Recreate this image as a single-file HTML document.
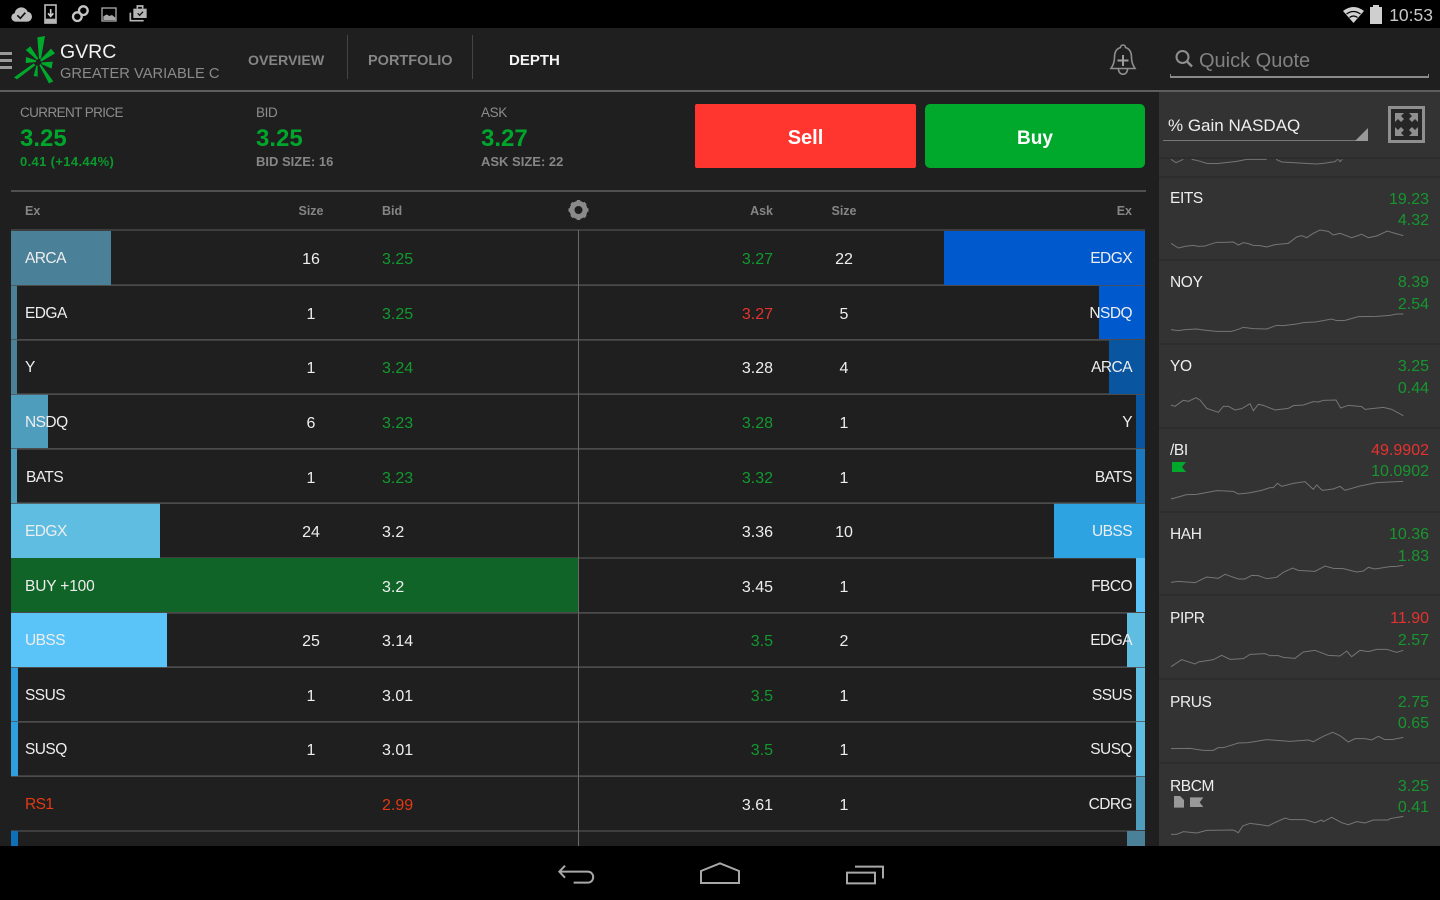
<!DOCTYPE html>
<html><head><meta charset="utf-8"><style>
html,body{margin:0;padding:0;background:#1f1f1f}
#p{position:relative;width:1440px;height:900px;overflow:hidden;background:#1f1f1f;font-family:"Liberation Sans",sans-serif;color:#eee}
#p div{position:absolute}
.t{position:absolute;line-height:20px;white-space:nowrap;font-size:15.5px;letter-spacing:-.55px;color:#eee}
.r{text-align:right}
.c{text-align:center}
.g{color:#12992f}
.rd{color:#e5322f}
.n{font-size:16px;letter-spacing:0}
.line{left:11px;width:1134px;height:2px;background:#3e3e3e}
.ov{left:11px;width:1134px;height:1px;background:rgba(80,80,80,.8)}
.h{font-size:12.5px;font-weight:bold;color:#858585;letter-spacing:0}
.sep{left:1159px;width:281px;height:2px;background:#2d2d2d}
.tick{left:1170px;font-size:15.5px;letter-spacing:-.4px;color:#eee}
.val{left:1329px;width:100px;text-align:right;font-size:16px;letter-spacing:0;color:#17962f}
svg{position:absolute;overflow:visible}
</style></head><body><div id="p">

<!-- status bar -->
<div style="left:0;top:0;width:1440px;height:28px;background:#000"></div>
<svg style="left:0;top:0" width="240" height="28" viewBox="0 0 720 84">
<g fill="#bdbdbd"><circle cx="64" cy="42" r="20"/><circle cx="47" cy="52" r="13"/><circle cx="81" cy="50" r="15"/><rect x="47" y="50" width="34" height="15"/></g><path d="M52 46l9 9 15-17" fill="none" stroke="#111" stroke-width="5"/>
<rect x="135" y="15" width="33" height="54" fill="none" stroke="#b5b5b5" stroke-width="5"/><path d="M152 27v22M144 40l8 9 8-9" fill="none" stroke="#ccc" stroke-width="5"/><rect x="135" y="56" width="33" height="13" fill="#b5b5b5"/>
<circle cx="232" cy="50" r="13" fill="none" stroke="#c5c5c5" stroke-width="7"/><circle cx="250" cy="32" r="13" fill="none" stroke="#c5c5c5" stroke-width="7"/>
<rect x="306" y="24" width="42" height="39" fill="none" stroke="#a8a8a8" stroke-width="4"/><path d="M310 60v-11l10-6 8 5 8-3 10 8v7z" fill="#a8a8a8"/>
<path d="M391 38v24h40" fill="none" stroke="#b5b5b5" stroke-width="5"/><rect x="400" y="26" width="40" height="28" fill="#b5b5b5"/><path d="M412 26v-8h16v8" fill="none" stroke="#b5b5b5" stroke-width="5"/><path d="M413 40l6 6 10-11" fill="none" stroke="#111" stroke-width="4"/>
</svg>
<svg style="left:1340px;top:4px" width="40" height="20" viewBox="0 0 40 20">
<path d="M3 7q10.500-8 21 0L13.500 19z" fill="#d0d0d0"/><path d="M6.500 10q7-5 14 0" fill="none" stroke="#000" stroke-width="1.200"/><path d="M9.500 13.500q4-3 8 0" fill="none" stroke="#000" stroke-width="1.200"/>
<rect x="30" y="3" width="12" height="17" fill="#cfcfcf"/><rect x="33" y="1" width="6" height="2" fill="#cfcfcf"/>
</svg>
<span class="t r" style="left:1370px;width:63px;top:5px;font-size:17.500px;letter-spacing:0;color:#c8c8c8">10:53</span>

<!-- app bar -->
<div style="left:0;top:90px;width:1440px;height:2px;background:#5e5e5e"></div>
<div style="left:0;top:52px;width:12px;height:3px;background:#9a9a9a"></div>
<div style="left:0;top:59px;width:12px;height:3px;background:#9a9a9a"></div>
<div style="left:0;top:66px;width:12px;height:3px;background:#9a9a9a"></div>
<svg style="left:0;top:0" width="240" height="95" viewBox="0 0 720 285"><g fill="#00a92c">
<polygon points="112,112 135,108 123,176 117,176"/><polygon points="153,146 165,160 124,185 120,180"/><polygon points="158,185 155,206 124,192 125,187"/><polygon points="147,250 160,244 122,192 118,196"/><polygon points="101,228 113,230 113,197 109,196"/><polygon points="42,232 51,238 106,196 101,190"/><polygon points="78,171 77,189 108,186 108,181"/><polygon points="77,150 91,139 115,176 111,180"/></g></svg>
<span class="t" style="left:60px;top:42px;font-size:19.500px;letter-spacing:0;color:#f2f2f2">GVRC</span>
<span class="t" style="left:60px;top:64px;font-size:14.700px;letter-spacing:0;color:#8a8a8a">GREATER VARIABLE C</span>
<span class="t" style="left:248px;top:51px;font-size:14.200px;letter-spacing:0;font-weight:bold;color:#858585">OVERVIEW</span>
<div style="left:347px;top:35px;width:1px;height:44px;background:#454545"></div>
<span class="t" style="left:368px;top:51px;font-size:14.500px;letter-spacing:0;font-weight:bold;color:#858585">PORTFOLIO</span>
<div style="left:472px;top:35px;width:1px;height:44px;background:#454545"></div>
<span class="t" style="left:509px;top:51px;font-size:15px;letter-spacing:0;font-weight:bold;color:#f4f4f4">DEPTH</span>
<svg style="left:1108px;top:42px" width="30" height="34" viewBox="0 0 30 34">
<path d="M15 3a2.500 2.500 0 0 1 2.500 2.500c5 1.500 6 6 6 10 0 4 1.500 8 3.500 11H3c2-3 3.500-7 3.500-11 0-4 1-8.500 6-10A2.500 2.500 0 0 1 15 3z" fill="none" stroke="#8e8e8e" stroke-width="1.600"/>
<path d="M10.500 27c0 7 9 7 9 0" fill="none" stroke="#8e8e8e" stroke-width="1.600"/><path d="M15 13v11M9.500 18.500h11" stroke="#9c9c9c" stroke-width="2" fill="none"/></svg>
<svg style="left:1174px;top:49px" width="22" height="22" viewBox="0 0 22 22"><circle cx="8.500" cy="8" r="6" fill="none" stroke="#8f8f8f" stroke-width="2"/><path d="M13 12.500l5 5" stroke="#8f8f8f" stroke-width="2.500"/></svg>
<span class="t" style="left:1199px;top:51px;font-size:20px;letter-spacing:0;color:#808080">Quick Quote</span>
<div style="left:1170px;top:76px;width:259px;height:2px;background:#8a8a8a"></div>
<div style="left:1170px;top:74px;width:1px;height:3px;background:#8a8a8a"></div>
<div style="left:1428px;top:74px;width:1px;height:3px;background:#8a8a8a"></div>

<!-- quote -->
<span class="t" style="left:20px;top:103px;font-size:13.500px;letter-spacing:-.6px;color:#8c8c8c">CURRENT PRICE</span>
<span class="t" style="left:20px;top:129px;font-size:24px;letter-spacing:0;font-weight:bold;color:#00a62c">3.25</span>
<span class="t" style="left:20px;top:152px;font-size:13px;letter-spacing:.35px;font-weight:bold;color:#0a9a2c">0.41 (+14.44%)</span>
<span class="t" style="left:256px;top:103px;font-size:13.500px;letter-spacing:-.4px;color:#8c8c8c">BID</span>
<span class="t" style="left:256px;top:129px;font-size:24px;letter-spacing:0;font-weight:bold;color:#00a62c">3.25</span>
<span class="t" style="left:256px;top:152px;font-size:13px;letter-spacing:0;font-weight:bold;color:#868686">BID SIZE: 16</span>
<span class="t" style="left:481px;top:103px;font-size:13.500px;letter-spacing:-.4px;color:#8c8c8c">ASK</span>
<span class="t" style="left:481px;top:129px;font-size:24px;letter-spacing:0;font-weight:bold;color:#00a62c">3.27</span>
<span class="t" style="left:481px;top:152px;font-size:13px;letter-spacing:0;font-weight:bold;color:#868686">ASK SIZE: 22</span>
<div style="left:695px;top:104px;width:221px;height:64px;background:#ff352f;border-radius:2px"></div>
<span class="t c" style="left:695px;width:221px;top:128px;font-size:20px;letter-spacing:0;font-weight:bold;color:#fff">Sell</span>
<div style="left:925px;top:104px;width:220px;height:64px;background:#00a92c;border-radius:5px"></div>
<span class="t c" style="left:925px;width:220px;top:129px;font-size:19px;letter-spacing:0;font-weight:bold;color:#fff">Buy</span>

<!-- table header -->
<div style="left:11px;top:190px;width:1135px;height:2px;background:#505050"></div>
<span class="t h" style="left:25px;top:201px">Ex</span>
<span class="t h c" style="left:281px;width:60px;top:201px">Size</span>
<span class="t h" style="left:382px;top:201px">Bid</span>
<svg style="left:567px;top:199px" width="23" height="23" viewBox="0 0 23 23"><circle cx="11.500" cy="11" r="6.500" fill="none" stroke="#8a8a8a" stroke-width="5"/><g stroke="#8a8a8a" stroke-width="3.500"><path d="M11.500 1v3M11.500 18v3M1.500 11h3M18.500 11h3M4.500 4l2 2M16.500 16l2 2M18.500 4l-2 2M6.500 16l-2 2"/></g></svg>
<span class="t h r" style="left:713px;width:60px;top:201px">Ask</span>
<span class="t h c" style="left:814px;width:60px;top:201px">Size</span>
<span class="t h r" style="left:1072px;width:60px;top:201px">Ex</span>

<!-- row lines -->
<div class="line" style="top:229px"></div>
<div class="line" style="top:284px"></div>
<div class="line" style="top:339px"></div>
<div class="line" style="top:393px"></div>
<div class="line" style="top:448px"></div>
<div class="line" style="top:502px"></div>
<div class="line" style="top:557px"></div>
<div class="line" style="top:612px"></div>
<div class="line" style="top:666px"></div>
<div class="line" style="top:721px"></div>
<div class="line" style="top:775px"></div>
<div class="line" style="top:830px"></div>

<!-- bars -->
<div style="left:11px;top:231px;width:100px;height:54px;background:#4a8199"></div>
<div style="left:11px;top:285px;width:6px;height:109px;background:#4a8199"></div>
<div style="left:11px;top:394px;width:37px;height:54px;background:#4f9dbd"></div>
<div style="left:11px;top:448px;width:6px;height:55px;background:#4f9dbd"></div>
<div style="left:11px;top:503px;width:149px;height:55px;background:#5fbde1"></div>
<div style="left:11px;top:558px;width:567px;height:54px;background:#106427"></div>
<div style="left:11px;top:613px;width:156px;height:54px;background:#5ac4f8"></div>
<div style="left:11px;top:667px;width:7px;height:109px;background:#2f9fe0"></div>
<div style="left:11px;top:831px;width:7px;height:16px;background:#0f70b8"></div>

<div style="left:944px;top:231px;width:201px;height:54px;background:#0059cd"></div>
<div style="left:1099px;top:285px;width:46px;height:54px;background:#0059cd"></div>
<div style="left:1109px;top:340px;width:36px;height:54px;background:#0a55a0"></div>
<div style="left:1136px;top:394px;width:9px;height:54px;background:#0a55a0"></div>
<div style="left:1136px;top:449px;width:9px;height:54px;background:#1a78c0"></div>
<div style="left:1054px;top:503px;width:91px;height:55px;background:#2ea3e2"></div>
<div style="left:1136px;top:558px;width:9px;height:54px;background:#5ac4f8"></div>
<div style="left:1127px;top:613px;width:18px;height:54px;background:#5fbde1"></div>
<div style="left:1136px;top:667px;width:9px;height:109px;background:#5fbde1"></div>
<div style="left:1136px;top:776px;width:9px;height:54px;background:#4f9dbd"></div>
<div style="left:1127px;top:831px;width:18px;height:16px;background:#4a8199"></div>

<!-- thin lines over bars -->
<div class="ov" style="top:285px"></div>
<div class="ov" style="top:339px"></div>
<div class="ov" style="top:394px"></div>
<div class="ov" style="top:448px"></div>
<div class="ov" style="top:503px"></div>
<div class="ov" style="top:612px"></div>
<div class="ov" style="top:667px"></div>
<div class="ov" style="top:721px"></div>
<div class="ov" style="top:776px"></div>
<div style="left:578px;top:230px;width:1px;height:616px;background:#6a6a6a"></div>

<!-- row text -->
<span class="t" style="left:25px;top:249px">ARCA</span><span class="t c n" style="left:281px;width:60px;top:250px">16</span><span class="t g n" style="left:382px;top:250px">3.25</span><span class="t g r n" style="left:693px;width:80px;top:250px">3.27</span><span class="t c n" style="left:814px;width:60px;top:250px">22</span><span class="t r" style="left:1032px;width:100px;top:249px">EDGX</span>
<span class="t" style="left:25px;top:304px">EDGA</span><span class="t c n" style="left:281px;width:60px;top:305px">1</span><span class="t g n" style="left:382px;top:305px">3.25</span><span class="t rd r n" style="left:693px;width:80px;top:305px">3.27</span><span class="t c n" style="left:814px;width:60px;top:305px">5</span><span class="t r" style="left:1032px;width:100px;top:304px">NSDQ</span>
<span class="t" style="left:25px;top:358px">Y</span><span class="t c n" style="left:281px;width:60px;top:359px">1</span><span class="t g n" style="left:382px;top:359px">3.24</span><span class="t r n" style="left:693px;width:80px;top:359px">3.28</span><span class="t c n" style="left:814px;width:60px;top:359px">4</span><span class="t r" style="left:1032px;width:100px;top:358px">ARCA</span>
<span class="t" style="left:25px;top:413px">NSDQ</span><span class="t c n" style="left:281px;width:60px;top:414px">6</span><span class="t g n" style="left:382px;top:414px">3.23</span><span class="t g r n" style="left:693px;width:80px;top:414px">3.28</span><span class="t c n" style="left:814px;width:60px;top:414px">1</span><span class="t r" style="left:1032px;width:100px;top:413px">Y</span>
<span class="t" style="left:26px;top:468px">BATS</span><span class="t c n" style="left:281px;width:60px;top:469px">1</span><span class="t g n" style="left:382px;top:469px">3.23</span><span class="t g r n" style="left:693px;width:80px;top:469px">3.32</span><span class="t c n" style="left:814px;width:60px;top:469px">1</span><span class="t r" style="left:1032px;width:100px;top:468px">BATS</span>
<span class="t" style="left:25px;top:522px">EDGX</span><span class="t c n" style="left:281px;width:60px;top:523px">24</span><span class="t n" style="left:382px;top:523px">3.2</span><span class="t r n" style="left:693px;width:80px;top:523px">3.36</span><span class="t c n" style="left:814px;width:60px;top:523px">10</span><span class="t r" style="left:1032px;width:100px;top:522px">UBSS</span>
<span class="t" style="left:25px;top:577px;letter-spacing:-.15px">BUY +100</span><span class="t n" style="left:382px;top:578px">3.2</span><span class="t r n" style="left:693px;width:80px;top:578px">3.45</span><span class="t c n" style="left:814px;width:60px;top:578px">1</span><span class="t r" style="left:1032px;width:100px;top:577px">FBCO</span>
<span class="t" style="left:25px;top:631px">UBSS</span><span class="t c n" style="left:281px;width:60px;top:632px">25</span><span class="t n" style="left:382px;top:632px">3.14</span><span class="t g r n" style="left:693px;width:80px;top:632px">3.5</span><span class="t c n" style="left:814px;width:60px;top:632px">2</span><span class="t r" style="left:1032px;width:100px;top:631px">EDGA</span>
<span class="t" style="left:25px;top:686px">SSUS</span><span class="t c n" style="left:281px;width:60px;top:687px">1</span><span class="t n" style="left:382px;top:687px">3.01</span><span class="t g r n" style="left:693px;width:80px;top:687px">3.5</span><span class="t c n" style="left:814px;width:60px;top:687px">1</span><span class="t r" style="left:1032px;width:100px;top:686px">SSUS</span>
<span class="t" style="left:25px;top:740px">SUSQ</span><span class="t c n" style="left:281px;width:60px;top:741px">1</span><span class="t n" style="left:382px;top:741px">3.01</span><span class="t g r n" style="left:693px;width:80px;top:741px">3.5</span><span class="t c n" style="left:814px;width:60px;top:741px">1</span><span class="t r" style="left:1032px;width:100px;top:740px">SUSQ</span>
<span class="t" style="left:25px;top:795px;color:#e23a12">RS1</span><span class="t n" style="left:382px;top:796px;color:#e23a12">2.99</span><span class="t r n" style="left:693px;width:80px;top:796px">3.61</span><span class="t c n" style="left:814px;width:60px;top:796px">1</span><span class="t r" style="left:1032px;width:100px;top:795px">CDRG</span>

<!-- sidebar -->
<div style="left:1159px;top:92px;width:281px;height:754px;background:#333"></div>
<span class="t" style="left:1168px;top:116px;font-size:17px;letter-spacing:0;color:#eee">% Gain NASDAQ</span>
<div style="left:1163px;top:140px;width:205px;height:1px;background:#777"></div>
<svg style="left:1355px;top:128px" width="14" height="14"><polygon points="13,0 13,13 0,13" fill="#999"/></svg>
<svg style="left:1388px;top:106px" width="37" height="37" viewBox="0 0 37 37"><rect x="1.500" y="1.500" width="34" height="34" fill="#262626" stroke="#8f8f8f" stroke-width="3"/><g fill="#8f8f8f"><polygon points="7,7 16,7 13,10 16,13 13,16 10,13 7,16"/><polygon points="30,7 21,7 24,10 21,13 24,16 27,13 30,16"/><polygon points="7,30 16,30 13,27 16,24 13,21 10,24 7,21"/><polygon points="30,30 21,30 24,27 21,24 24,21 27,24 30,21"/></g></svg>
<div class="sep" style="top:157px"></div>
<svg style="left:1090px;top:0" width="350" height="170" viewBox="0 0 1050 510"><g fill="none" stroke="#757575" stroke-width="3"><polyline points="243,478 258,488 280,478"/><polyline points="305,478 320,481 350,490 380,491 440,484 470,478 530,478"/><polyline points="558,478 575,486 680,492 700,490 735,485 742,478"/><polyline points="745,478 750,485 757,478"/></g></svg>
<div class="sep" style="top:176px"></div>
<div class="sep" style="top:259px"></div>
<div class="sep" style="top:343px"></div>
<div class="sep" style="top:427px"></div>
<div class="sep" style="top:511px"></div>
<div class="sep" style="top:594px"></div>
<div class="sep" style="top:678px"></div>
<div class="sep" style="top:762px"></div>

<svg style="left:1160px;top:170px" width="280" height="340" viewBox="0 0 840 1020"><g fill="none" stroke="#757575" stroke-width="3">
<polyline points="33,220 55,234 75,229 100,226 115,229 135,228 150,223 170,217 190,217 220,216 235,225 250,218 265,221 280,226 300,227 320,231 345,224 385,220 410,201 425,197 440,203 460,190 480,180 505,184 520,195 540,190 575,203 605,193 625,203 650,198 682,183 705,190 730,197"/>
<polyline points="33,479 55,482 75,479 110,477 130,480 170,484 215,484 235,478 250,472 280,476 320,477 350,466 370,467 410,462 430,458 465,456 490,452 515,447 530,452 555,451 595,440 650,439 690,436 710,432 730,432"/>
<polyline points="33,705 45,709 70,691 85,694 108,683 120,690 140,715 175,727 190,709 205,709 225,720 245,716 270,701 280,722 295,703 310,706 345,720 385,715 400,707 430,705 460,695 475,696 490,691 528,690 542,714 565,706 605,710 615,718 670,712 695,718 730,737"/>
<polyline points="33,987 55,981 80,974 110,973 170,962 220,964 235,972 265,969 305,961 330,953 340,953 352,940 365,949 400,940 435,935 460,958 470,945 487,961 520,957 540,949 555,961 600,948 650,938 690,936 730,934"/>
</g></svg>
<svg style="left:1160px;top:510px" width="280" height="340" viewBox="0 0 840 1020"><g fill="none" stroke="#757575" stroke-width="3">
<polyline points="33,217 55,214 105,218 140,201 175,205 195,193 235,207 255,207 275,196 295,197 320,206 350,202 370,187 398,174 415,181 465,184 495,168 520,175 550,176 590,186 610,183 625,172 645,177 690,170 710,169 730,166"/>
<polyline points="33,470 65,449 105,462 115,456 160,449 185,436 210,448 250,446 270,433 315,431 330,437 355,437 370,442 405,445 430,426 465,421 505,436 540,438 560,423 575,440 600,421 625,425 650,418 680,418 710,427 730,421"/>
<polyline points="33,716 90,715 130,721 160,721 175,713 190,713 235,699 265,698 320,689 390,694 445,690 460,695 490,679 518,667 540,677 565,696 585,686 615,686 635,690 655,679 675,689 700,688 730,682"/>
<polyline points="33,973 50,973 70,965 110,969 140,961 220,960 235,968 248,948 270,940 300,944 325,948 340,940 375,924 390,929 435,929 465,938 485,930 490,935 515,922 545,938 565,944 590,935 615,939 640,930 685,930 690,926 730,919"/>
</g>
<polygon points="42,858 60,858 72,870 72,893 42,893" fill="#999"/>
<polygon points="90,862 130,862 119,877 130,891 90,891" fill="#999"/>
</svg>
<svg style="left:1172px;top:462px" width="15" height="10"><polygon points="0,0 14,0 10,5 14,10 0,10" fill="#00a92c"/></svg>

<span class="t tick" style="top:189px">EITS</span><span class="t val" style="top:190px">19.23</span><span class="t val" style="top:211px">4.32</span>
<span class="t tick" style="top:273px">NOY</span><span class="t val" style="top:273px">8.39</span><span class="t val" style="top:295px">2.54</span>
<span class="t tick" style="top:357px">YO</span><span class="t val" style="top:357px">3.25</span><span class="t val" style="top:379px">0.44</span>
<span class="t tick" style="top:441px">/BI</span><span class="t val" style="top:441px;color:#e5322f">49.9902</span><span class="t val" style="top:462px">10.0902</span>
<span class="t tick" style="top:525px">HAH</span><span class="t val" style="top:525px">10.36</span><span class="t val" style="top:547px">1.83</span>
<span class="t tick" style="top:609px">PIPR</span><span class="t val" style="top:609px;color:#e5322f">11.90</span><span class="t val" style="top:631px">2.57</span>
<span class="t tick" style="top:693px">PRUS</span><span class="t val" style="top:693px">2.75</span><span class="t val" style="top:714px">0.65</span>
<span class="t tick" style="top:777px">RBCM</span><span class="t val" style="top:777px">3.25</span><span class="t val" style="top:798px">0.41</span>

<!-- nav bar -->
<div style="left:0;top:846px;width:1440px;height:54px;background:#000"></div>
<svg style="left:530px;top:845px" width="380" height="55" viewBox="0 0 1140 165"><g fill="none" stroke="#a8a8a8" stroke-width="6">
<path d="M105 62L88 80l17 18M88 80h85c22 0 22 33 0 33h-42"/>
<path d="M513 114V78l57-23 57 23v36z"/>
<path d="M951 83h84v32h-84z"/><path d="M975 65h84v35"/></g></svg>
</div></body></html>
